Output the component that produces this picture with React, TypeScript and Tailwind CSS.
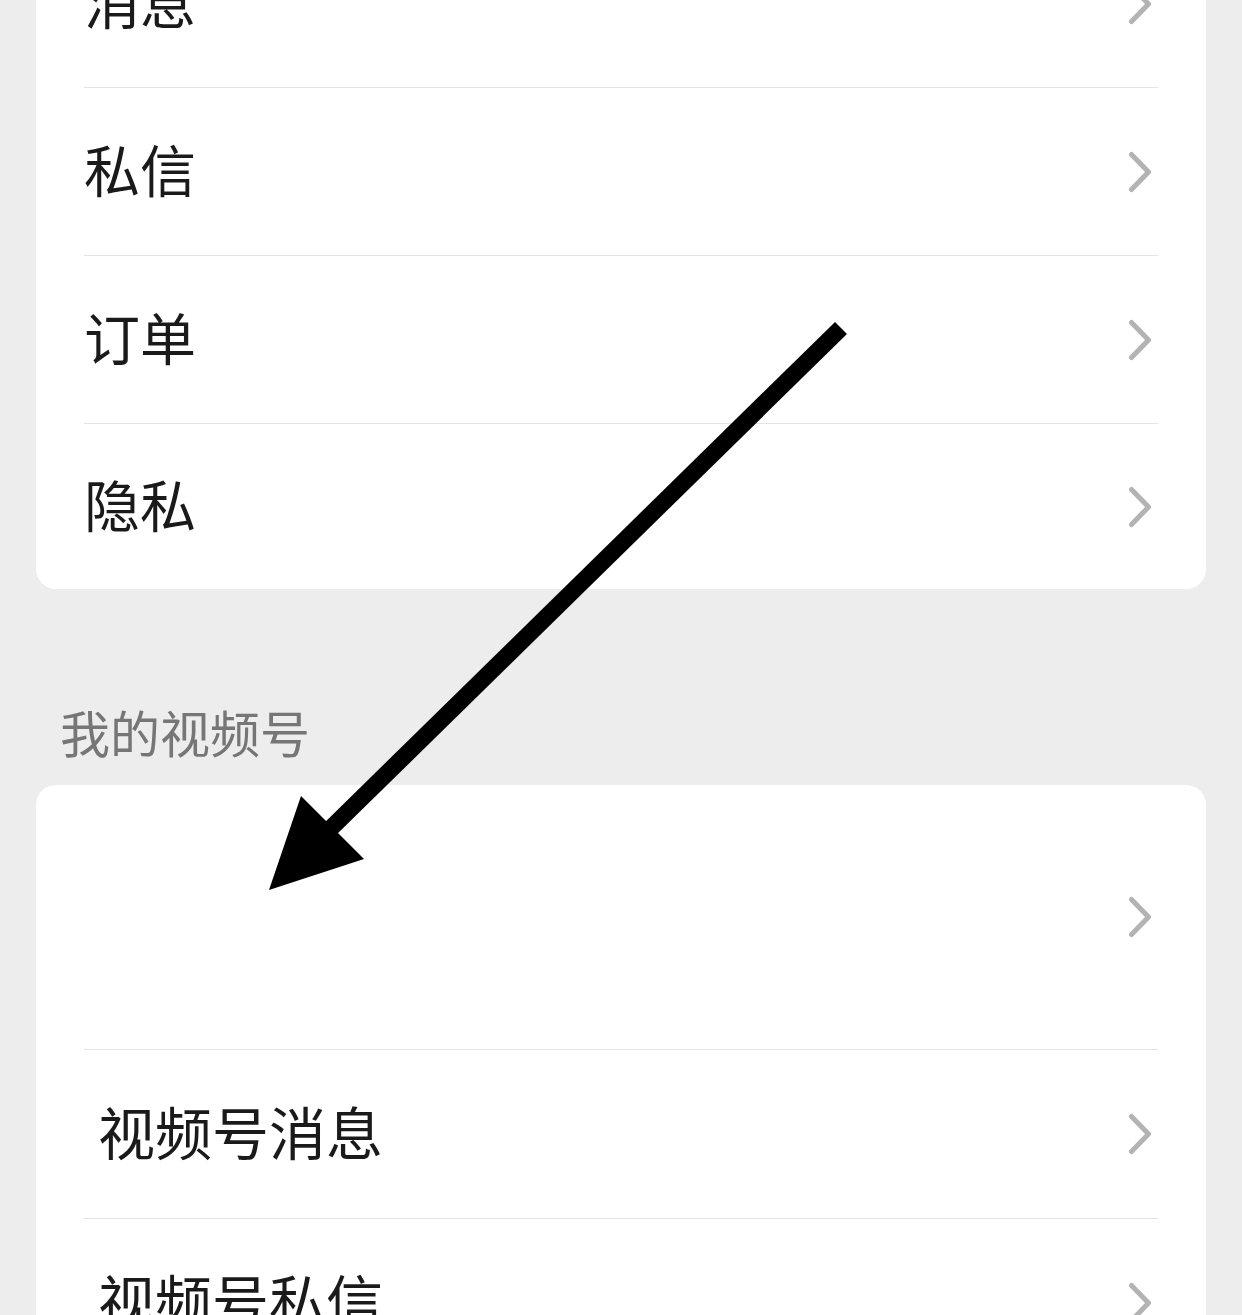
import React from "react";

function Chevron() {
  return (
    <svg width="26" height="42" viewBox="0 0 26 42" className="mr-[4px] shrink-0">
      <polyline
        points="3.5,3.5 20.5,21 3.5,38.5"
        fill="none"
        stroke="#b3b3b3"
        strokeWidth="5"
        strokeLinecap="round"
        strokeLinejoin="round"
      />
    </svg>
  );
}

function Row({ label, h = "h-[167px]", indent = false }: { label?: string; h?: string; indent?: boolean }) {
  return (
    <div className={`flex ${h} items-center justify-between px-12`}>
      <span className={`mb-[8px] text-[56px] leading-none text-[#1a1a1a] ${indent ? "ml-[14px] text-[57px]" : ""}`}>{label ?? ""}</span>
      <Chevron />
    </div>
  );
}

function Divider() {
  return <div className="mx-12 h-px bg-[#e3e3e3]" />;
}

export default function App() {
  return (
    <div className="relative h-[1315px] overflow-hidden bg-[#ededed] font-['Noto_Sans_CJK_SC',sans-serif]">
      <div className="mx-[36px] -mt-[80px] rounded-[20px] bg-white">
        <Row label="消息" />
        <Divider />
        <Row label="私信" />
        <Divider />
        <Row label="订单" />
        <Divider />
        <Row label="隐私" h="h-[165px]" />
      </div>

      <div className="mt-[117px] mb-[29px] pl-[60px] text-[50px] leading-[50px] text-[#767676]">我的视频号</div>

      <div className="mx-[36px] rounded-[20px] bg-white">
        <Row h="h-[264px]" />
        <Divider />
        <Row label="视频号消息" h="h-[168px]" indent />
        <Divider />
        <Row label="视频号私信" indent />
      </div>

      <svg className="pointer-events-none absolute left-0 top-0" width="1242" height="1315" viewBox="0 0 1242 1315">
        <line x1="841" y1="328" x2="325" y2="834" stroke="#000" strokeWidth="17" strokeLinecap="butt" />
        <polygon points="301,796 364,859 269,890" fill="#000" />
      </svg>
    </div>
  );
}
